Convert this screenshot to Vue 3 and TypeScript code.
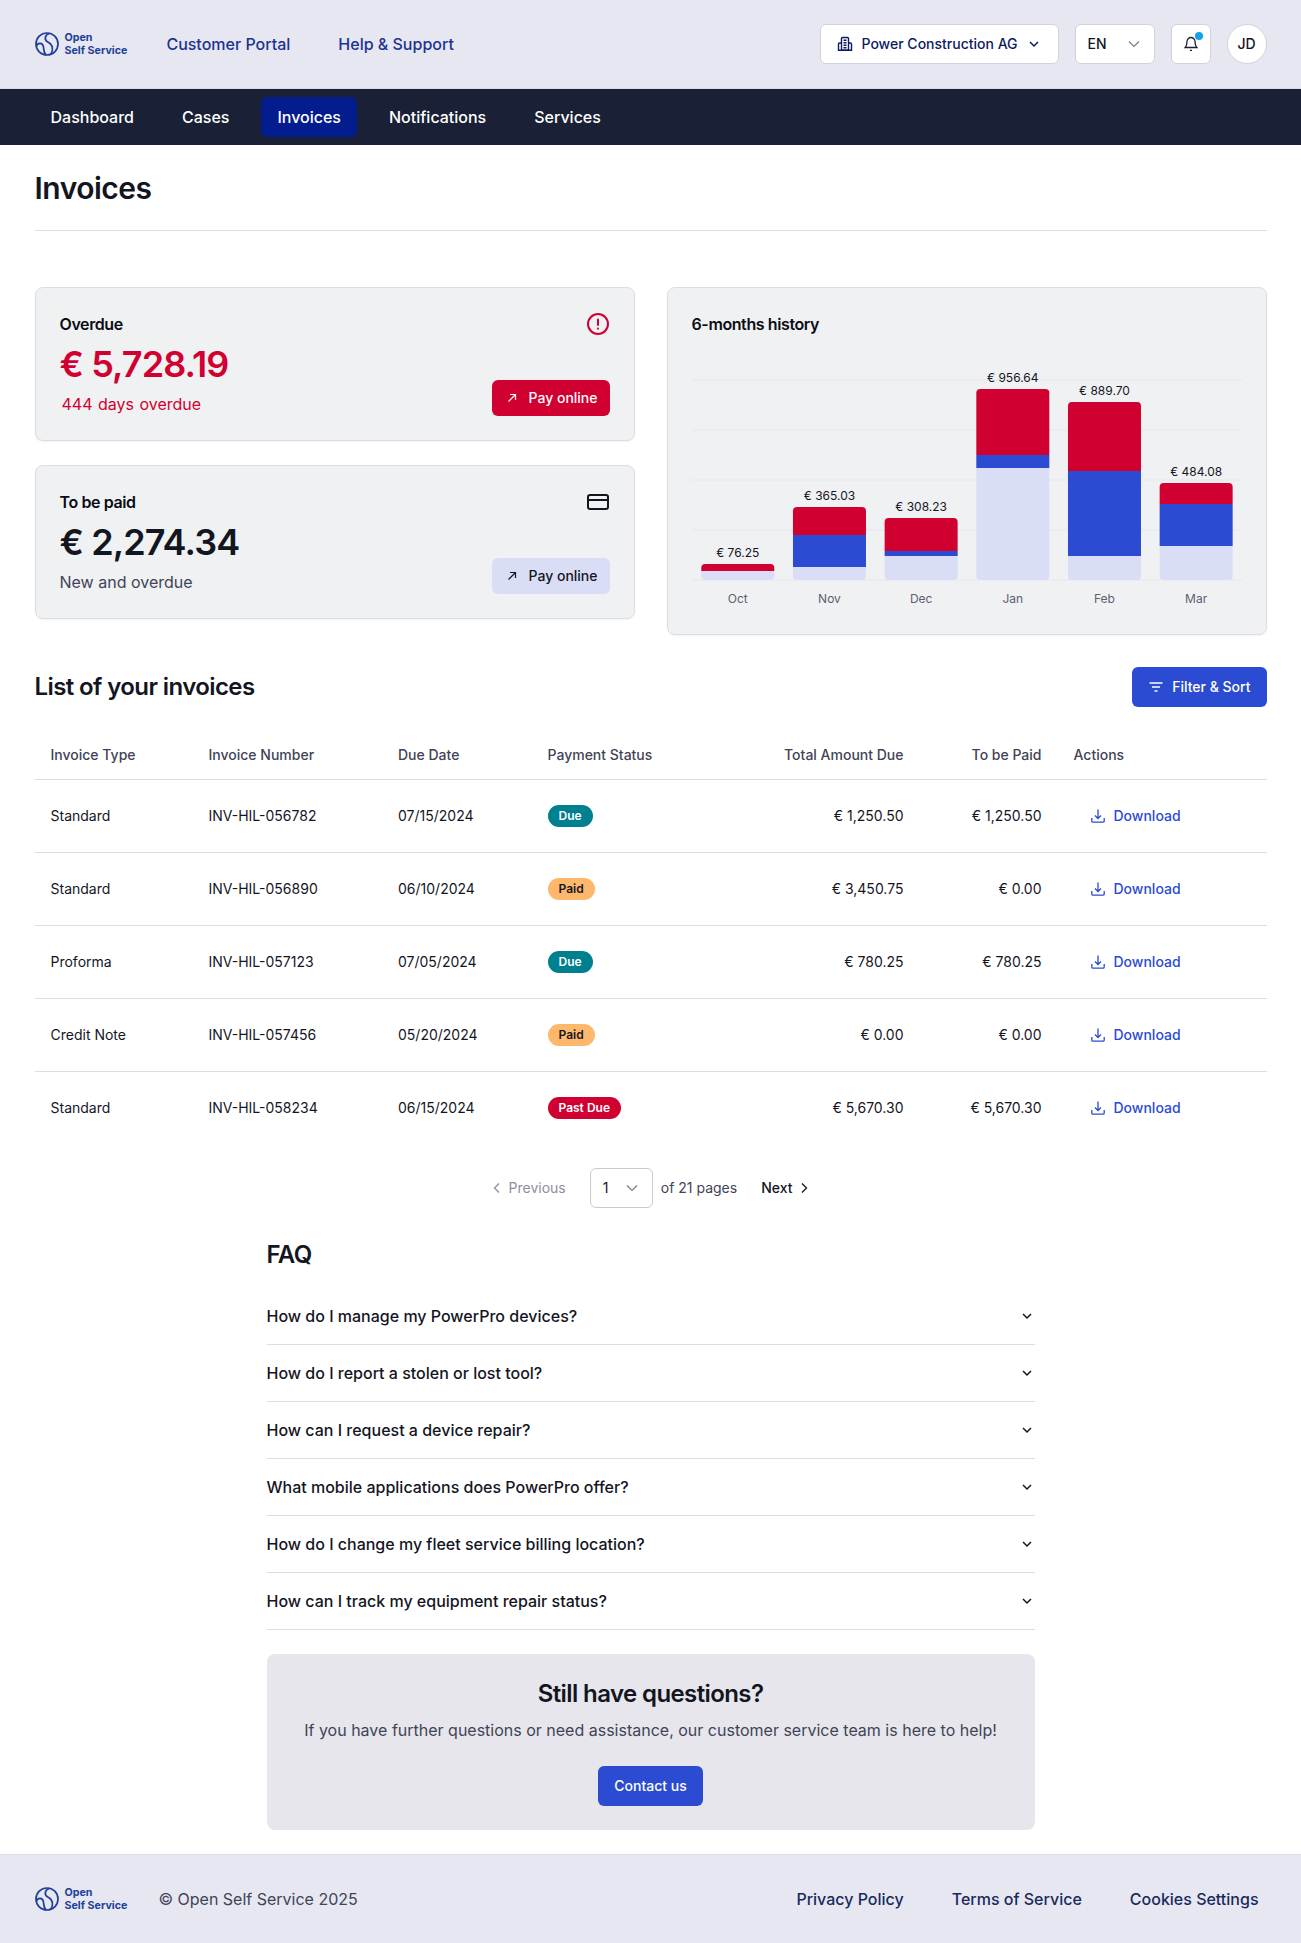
<template>
  <div class="page">
    <header class="topbar">
      <div class="topbar-left">
        <a class="logo">
          <svg class="logo-mark" viewBox="0 0 24 24" fill="none" stroke="currentColor" stroke-width="1.7">
            <circle cx="12" cy="12" r="11" />
            <path d="M14.5 1.2C9.5 3 8.8 8 13.2 10.2C18 12.6 18.6 18 15.8 22.2" />
            <path d="M1.2 14.5C2.4 10.5 7.6 10.2 8.4 14.6C8.9 17.8 8.6 20.8 11.2 22.9" />
          </svg>
          <span class="logo-text">Open<br />Self Service</span>
        </a>
        <nav class="top-links">
          <a>Customer Portal</a>
          <a>Help &amp; Support</a>
        </nav>
      </div>
      <div class="topbar-right">
        <button class="control org">
          <svg class="icon" viewBox="0 0 16 16" fill="none" stroke="currentColor" stroke-width="1.4">
            <path d="M4.5 14.300V2.500a1 1 0 0 1 1-1h5a1 1 0 0 1 1 1v11.800z" />
            <path d="M4.500 7H2.500a1 1 0 0 0-1 1v6.300h13V8a1 1 0 0 0-1-1h-2" />
            <path d="M6.500 4.300h3M6.500 6.800h3M6.500 9.300h3M6.500 11.800h3" />
          </svg>
          <span class="org-name">Power Construction AG</span>
          <svg class="icon chev" viewBox="0 0 16 16" fill="none" stroke="currentColor" stroke-width="1.500"><path d="M4 6l4 4 4-4" /></svg>
        </button>
        <button class="control lang">
          <span>EN</span>
          <svg class="icon chev muted" viewBox="0 0 16 16" fill="none" stroke="currentColor" stroke-width="1.200"><path d="M3 5.500l5 5 5-5" /></svg>
        </button>
        <button class="control square">
          <svg class="icon" viewBox="0 0 16 16" fill="none" stroke="currentColor" stroke-width="1.300">
            <path d="M8 1.500a4 4 0 0 0-4 4c0 3.300-.8 4.800-1.800 6h11.600c-1-1.200-1.800-2.700-1.800-6a4 4 0 0 0-4-4z" />
            <path d="M7 14.300h2" />
          </svg>
          <span class="dot"></span>
        </button>
        <button class="control avatar">JD</button>
      </div>
    </header>

    <nav class="mainnav">
      <a v-for="item in navItems" :key="item" :class="{ active: item === 'Invoices' }">{{ item }}</a>
    </nav>

    <main class="content">
      <div class="title-block">
        <h1>Invoices</h1>
      </div>

      <section class="summary">
        <div class="summary-left">
          <div class="card">
            <div class="card-head">
              <span class="card-title">Overdue</span>
              <svg class="icon-lg red" viewBox="0 0 24 24" fill="none" stroke="currentColor" stroke-width="2" stroke-linecap="round">
                <circle cx="12" cy="12" r="10" />
                <path d="M12 7.500v5.500M12 16.500v.2" />
              </svg>
            </div>
            <div class="card-foot">
              <div>
                <div class="amount red">€ 5,728.19</div>
                <div class="note red indent">444 days overdue</div>
              </div>
              <button class="btn btn-red">
                <svg class="icon" viewBox="0 0 16 16" fill="none" stroke="currentColor" stroke-width="1.200"><path d="M4.500 11.500l7-7M6 4.500h5.500V10" /></svg>
                Pay online
              </button>
            </div>
          </div>
          <div class="card">
            <div class="card-head">
              <span class="card-title">To be paid</span>
              <svg class="icon-lg" viewBox="0 0 24 24" fill="none" stroke="currentColor" stroke-width="2">
                <rect x="2" y="5" width="20" height="14" rx="2" />
                <path d="M2 10h20" />
              </svg>
            </div>
            <div class="card-foot">
              <div>
                <div class="amount">€ 2,274.34</div>
                <div class="note">New and overdue</div>
              </div>
              <button class="btn btn-soft">
                <svg class="icon" viewBox="0 0 16 16" fill="none" stroke="currentColor" stroke-width="1.200"><path d="M4.500 11.500l7-7M6 4.500h5.500V10" /></svg>
                Pay online
              </button>
            </div>
          </div>
        </div>

        <div class="card chart-card">
          <div class="card-title">6-months history</div>
          <svg class="chart" viewBox="0 0 550 274" width="550" height="274">
            <line v-for="y in gridLines" :key="y" x1="0" x2="550" :y1="y" :y2="y" class="grid-line" />
            <g v-for="bar in bars" :key="bar.month">
              <path :d="bar.lavPath" fill="#d9ddf6" />
              <rect :x="bar.x" :y="bar.blueTop" width="73" :height="bar.blueHeight" fill="#2b4bd3" />
              <path :d="bar.redPath" fill="#d00030" />
              <text :x="bar.x + 36.500" :y="bar.top - 7" class="bar-value">{{ bar.value }}</text>
              <text :x="bar.x + 36.500" y="267" class="bar-month">{{ bar.month }}</text>
            </g>
          </svg>
        </div>
      </section>

      <div class="list-head">
        <h2>List of your invoices</h2>
        <button class="btn btn-blue filter">
          <svg class="icon" viewBox="0 0 16 16" fill="none" stroke="currentColor" stroke-width="1.300"><path d="M1.500 4h13M4 8h8M6.500 12h3" /></svg>
          Filter &amp; Sort
        </button>
      </div>

      <table class="invoices">
        <colgroup>
          <col class="c-type" /><col class="c-num" /><col class="c-date" /><col class="c-status" />
          <col class="c-total" /><col class="c-due" /><col class="c-actions" />
        </colgroup>
        <thead>
          <tr>
            <th>Invoice Type</th>
            <th>Invoice Number</th>
            <th>Due Date</th>
            <th>Payment Status</th>
            <th class="num">Total Amount Due</th>
            <th class="num">To be Paid</th>
            <th>Actions</th>
          </tr>
        </thead>
        <tbody>
          <tr v-for="row in invoices" :key="row.number">
            <td>{{ row.type }}</td>
            <td>{{ row.number }}</td>
            <td>{{ row.date }}</td>
            <td><span class="badge" :class="row.badge">{{ row.status }}</span></td>
            <td class="num">{{ row.total }}</td>
            <td class="num">{{ row.toPay }}</td>
            <td>
              <a class="download">
                <svg class="icon" viewBox="0 0 16 16" fill="none" stroke="currentColor" stroke-width="1.300">
                  <path d="M8 1.500v8.500M5 7.500l3 3 3-3" />
                  <path d="M1.800 10v3a1.200 1.200 0 0 0 1.200 1.200h10a1.200 1.200 0 0 0 1.200-1.200v-3" />
                </svg>
                Download
              </a>
            </td>
          </tr>
        </tbody>
      </table>

      <div class="pager">
        <span class="pager-link disabled">
          <svg class="icon" viewBox="0 0 16 16" fill="none" stroke="currentColor" stroke-width="1.300"><path d="M10 3.500L5.500 8l4.500 4.500" /></svg>
          Previous
        </span>
        <span class="page-select">
          1
          <svg class="icon muted" viewBox="0 0 16 16" fill="none" stroke="currentColor" stroke-width="1.200"><path d="M3 5.500l5 5 5-5" /></svg>
        </span>
        <span class="page-count">of 21 pages</span>
        <span class="pager-link">
          Next
          <svg class="icon" viewBox="0 0 16 16" fill="none" stroke="currentColor" stroke-width="1.300"><path d="M6 3.500L10.500 8 6 12.500" /></svg>
        </span>
      </div>

      <section class="faq">
        <h2>FAQ</h2>
        <div class="faq-list">
          <div v-for="q in faqs" :key="q" class="faq-item">
            <span>{{ q }}</span>
            <svg class="icon" viewBox="0 0 16 16" fill="none" stroke="currentColor" stroke-width="1.500"><path d="M4 6l4 4 4-4" /></svg>
          </div>
        </div>
        <div class="contact">
          <h2>Still have questions?</h2>
          <p>If you have further questions or need assistance, our customer service team is here to help!</p>
          <button class="btn btn-blue contact-btn">Contact us</button>
        </div>
      </section>
    </main>

    <footer class="footer">
      <div class="footer-left">
        <a class="logo">
          <svg class="logo-mark" viewBox="0 0 24 24" fill="none" stroke="currentColor" stroke-width="1.700">
            <circle cx="12" cy="12" r="11" />
            <path d="M14.500 1.200C9.500 3 8.800 8 13.200 10.200C18 12.600 18.600 18 15.800 22.200" />
            <path d="M1.200 14.500C2.400 10.500 7.600 10.200 8.400 14.600C8.900 17.800 8.600 20.800 11.200 22.900" />
          </svg>
          <span class="logo-text">Open<br />Self Service</span>
        </a>
        <span class="copyright">© Open Self Service 2025</span>
      </div>
      <nav class="footer-links">
        <a>Privacy Policy</a>
        <a>Terms of Service</a>
        <a>Cookies Settings</a>
      </nav>
    </footer>
  </div>
</template>

<script setup lang="ts">
import { computed } from 'vue'

interface Invoice {
  type: string
  number: string
  date: string
  status: string
  badge: string
  total: string
  toPay: string
}

const navItems = ['Dashboard', 'Cases', 'Invoices', 'Notifications', 'Services']

const invoices: Invoice[] = [
  { type: 'Standard', number: 'INV-HIL-056782', date: '07/15/2024', status: 'Due', badge: 'due', total: '€ 1,250.50', toPay: '€ 1,250.50' },
  { type: 'Standard', number: 'INV-HIL-056890', date: '06/10/2024', status: 'Paid', badge: 'paid', total: '€ 3,450.75', toPay: '€ 0.00' },
  { type: 'Proforma', number: 'INV-HIL-057123', date: '07/05/2024', status: 'Due', badge: 'due', total: '€ 780.25', toPay: '€ 780.25' },
  { type: 'Credit Note', number: 'INV-HIL-057456', date: '05/20/2024', status: 'Paid', badge: 'paid', total: '€ 0.00', toPay: '€ 0.00' },
  { type: 'Standard', number: 'INV-HIL-058234', date: '06/15/2024', status: 'Past Due', badge: 'past', total: '€ 5,670.30', toPay: '€ 5,670.30' }
]

const faqs = [
  'How do I manage my PowerPro devices?',
  'How do I report a stolen or lost tool?',
  'How can I request a device repair?',
  'What mobile applications does PowerPro offer?',
  'How do I change my fleet service billing location?',
  'How can I track my equipment repair status?'
]

// chart geometry, y values are relative to the svg top
const baseline = 244
const gridLines = [44, 94, 144, 194, 244]

const history = [
  { month: 'Oct', value: '€ 76.25', top: 228, redEnd: 235, blueEnd: 235 },
  { month: 'Nov', value: '€ 365.03', top: 171, redEnd: 199, blueEnd: 231 },
  { month: 'Dec', value: '€ 308.23', top: 182, redEnd: 215, blueEnd: 220 },
  { month: 'Jan', value: '€ 956.64', top: 53, redEnd: 119, blueEnd: 132 },
  { month: 'Feb', value: '€ 889.70', top: 66, redEnd: 135, blueEnd: 220 },
  { month: 'Mar', value: '€ 484.08', top: 147, redEnd: 168, blueEnd: 210 }
]

const roundedTop = (x: number, top: number, bottom: number) =>
  `M${x} ${bottom}V${top + 4}a4 4 0 0 1 4-4h65a4 4 0 0 1 4 4V${bottom}z`

const roundedBottom = (x: number, top: number, bottom: number) =>
  `M${x} ${top}h73V${bottom - 4}a4 4 0 0 1-4 4h-65a4 4 0 0 1-4-4z`

const bars = computed(() =>
  history.map((h, i) => {
    const x = 9.3 + i * 91.67
    return {
      ...h,
      x,
      redPath: roundedTop(x, h.top, h.redEnd),
      blueTop: h.redEnd,
      blueHeight: h.blueEnd - h.redEnd,
      lavPath: roundedBottom(x, h.blueEnd, baseline)
    }
  })
)
</script>

<style scoped>
.page {
  font-family: Inter, "Liberation Sans", sans-serif;
  color: #14161f;
  font-size: 14px;
  line-height: 20px;
  background: #fff;
}

h1, h2, p {
  margin: 0;
}

button {
  font-family: inherit;
  line-height: 20px;
  cursor: pointer;
}

.icon {
  width: 16px;
  height: 16px;
  flex: none;
}

.icon-lg {
  width: 24px;
  height: 24px;
  flex: none;
}

.red {
  color: #d00030;
}

.muted {
  color: #787c8c;
}

/* header */
.topbar {
  height: 88px;
  background: #e6e7f1;
  border-bottom: 1px solid #dcdde6;
  padding: 0 34.5px;
  display: flex;
  align-items: center;
  justify-content: space-between;
}

.topbar-left {
  display: flex;
  align-items: center;
  gap: 39px;
}

.logo {
  display: flex;
  align-items: center;
  gap: 6px;
  color: #21409a;
}

.logo-mark {
  width: 24px;
  height: 24px;
  flex: none;
}

.logo-text {
  font-size: 10.7px;
  line-height: 13px;
  font-weight: 700;
  white-space: nowrap;
}

.top-links {
  display: flex;
  gap: 48px;
}

.top-links a {
  font-size: 16px;
  line-height: 24px;
  font-weight: 500;
  color: #1c3391;
}

.topbar-right {
  display: flex;
  align-items: center;
  gap: 16px;
}

.control {
  height: 40px;
  background: #fff;
  border: 1px solid #d1d3dc;
  border-radius: 6px;
  font-size: 14px;
  font-weight: 500;
  color: #0d1b5e;
  display: flex;
  align-items: center;
  padding: 0;
  position: relative;
}

.org {
  width: 239px;
  padding: 0 16px;
  gap: 8px;
}

.org-name {
  white-space: nowrap;
  margin-left: 1px;
}

.lang {
  width: 80px;
  padding: 0 12px;
  justify-content: space-between;
  color: #14161f;
}

.square {
  width: 40px;
  justify-content: center;
  color: #1a2035;
}

.dot {
  position: absolute;
  top: 7px;
  right: 7px;
  width: 8px;
  height: 8px;
  border-radius: 50%;
  background: #0ea5e9;
}

.avatar {
  width: 40px;
  border-radius: 50%;
  justify-content: center;
  color: #14161f;
}

/* main nav */
.mainnav {
  height: 56px;
  background: #1a2035;
  padding: 0 34.5px;
  display: flex;
  align-items: center;
  gap: 16px;
}

.mainnav a {
  height: 40px;
  padding: 0 16px;
  display: flex;
  align-items: center;
  border-radius: 6px;
  font-size: 16px;
  font-weight: 500;
  color: #fff;
}

.mainnav a.active {
  background: #031d8f;
}

/* content */
.content {
  padding: 0 34.5px;
}

.title-block {
  padding: 25px 0 24px;
  border-bottom: 1px solid #dcdde6;
  margin-bottom: 56px;
}

h1 {
  font-size: 30px;
  line-height: 36px;
  font-weight: 600;
  letter-spacing: -0.5px;
}

.summary {
  display: grid;
  grid-template-columns: 1fr 1fr;
  gap: 32px;
  align-items: start;
}

.summary-left {
  display: flex;
  flex-direction: column;
  gap: 24px;
}

.card {
  background: #f0f1f3;
  border: 1px solid #dcdde3;
  border-radius: 8px;
  padding: 24px;
  box-shadow: 0 1px 2px rgba(20, 22, 31, 0.05);
}

.card-head {
  display: flex;
  justify-content: space-between;
  align-items: center;
  height: 24px;
  margin-bottom: 8px;
}

.card-title {
  font-size: 16px;
  line-height: 24px;
  font-weight: 600;
  letter-spacing: -0.025em;
  color: #0b0d14;
}

.card-foot {
  display: flex;
  justify-content: space-between;
  align-items: flex-end;
}

.amount {
  font-size: 36px;
  line-height: 40px;
  font-weight: 600;
  letter-spacing: -0.025em;
  color: #14161f;
}

.amount.red {
  color: #d00030;
}

.note {
  font-size: 16px;
  line-height: 24px;
  margin-top: 8px;
  color: #3f4456;
}

.note.red {
  color: #d00030;
}

.note.indent {
  padding-left: 2px;
  word-spacing: 1px;
}

.btn {
  height: 36px;
  border: 0;
  border-radius: 6px;
  padding: 0 12px;
  display: flex;
  align-items: center;
  gap: 8px;
  font-size: 14px;
  font-weight: 500;
  white-space: nowrap;
}

.btn-red {
  background: #d00030;
  color: #fff;
}

.btn-soft {
  background: #d9ddf6;
  color: #14161f;
}

.btn-blue {
  background: #2b4bd3;
  color: #fff;
  height: 40px;
  padding: 0 16px;
}

.chart {
  display: block;
}

.grid-line {
  stroke: #e9eaee;
  stroke-width: 1.5;
}

.bar-value {
  font-size: 12px;
  text-anchor: middle;
  fill: #14161f;
}

.bar-month {
  font-size: 12px;
  text-anchor: middle;
  fill: #5c6070;
}

/* invoice list */
.list-head {
  display: flex;
  justify-content: space-between;
  align-items: center;
  margin-top: 32px;
  margin-bottom: 24px;
}

.list-head h2,
.faq h2,
.contact h2 {
  font-size: 24px;
  line-height: 32px;
  font-weight: 600;
  letter-spacing: -0.025em;
}

.invoices {
  width: 100%;
  border-collapse: collapse;
  table-layout: fixed;
}

.c-type { width: 158px; }
.c-num { width: 189.5px; }
.c-date { width: 149.5px; }
.c-status { width: 190px; }
.c-total { width: 198px; }
.c-due { width: 138px; }

.invoices th {
  height: 48px;
  padding: 0 16px;
  text-align: left;
  font-weight: 500;
  color: #3f4456;
  border-bottom: 1px solid #dcdde6;
}

.invoices td {
  height: 72px;
  padding: 0 16px;
  border-bottom: 1px solid #dcdde6;
}

.invoices tbody tr:last-child td {
  border-bottom: 0;
}

.invoices .num {
  text-align: right;
}

.badge {
  display: inline-flex;
  align-items: center;
  height: 22px;
  padding: 0 11px;
  border-radius: 11px;
  font-size: 12px;
  font-weight: 600;
  vertical-align: middle;
}

.badge.due {
  background: #00808f;
  color: #fff;
}

.badge.paid {
  background: #fdb86b;
  color: #14161f;
}

.badge.past {
  background: #d00030;
  color: #fff;
}

.download {
  display: flex;
  align-items: center;
  gap: 8px;
  padding-left: 16px;
  color: #2b4bd3;
  font-weight: 500;
}

/* pagination */
.pager {
  display: flex;
  justify-content: center;
  align-items: center;
  margin-top: 24px;
  gap: 8px;
}

.pager-link {
  display: flex;
  align-items: center;
  gap: 4px;
  font-weight: 500;
  padding: 0 8px;
  color: #14161f;
}

.pager-link.disabled {
  color: #8d909c;
  font-weight: 400;
  margin-right: 8px;
}

.page-select {
  box-sizing: border-box;
  width: 63px;
  height: 40px;
  border: 1px solid #c9cbd3;
  border-radius: 6px;
  padding: 0 12px;
  display: flex;
  align-items: center;
  justify-content: space-between;
}

.page-count {
  color: #3f4456;
  margin-right: 8px;
}

/* faq */
.faq {
  width: 768px;
  margin: 31px auto 24px;
}

.faq-list {
  margin-top: 17px;
}

.faq-item {
  height: 56px;
  border-bottom: 1px solid #dcdde6;
  display: flex;
  align-items: center;
  justify-content: space-between;
  font-size: 16px;
  font-weight: 500;
}

.contact {
  margin-top: 24px;
  padding: 24px;
  background: #e6e6ec;
  border-radius: 8px;
  display: flex;
  flex-direction: column;
  align-items: center;
  text-align: center;
}

.contact p {
  margin-top: 8px;
  font-size: 16px;
  line-height: 24px;
  color: #3f4456;
}

.contact-btn {
  margin-top: 24px;
}

/* footer */
.footer {
  height: 88px;
  background: #e6e7f1;
  border-top: 1px solid #dcdde6;
  padding: 0 34.5px;
  display: flex;
  align-items: center;
  justify-content: space-between;
}

.footer-left {
  display: flex;
  align-items: center;
  gap: 31px;
}

.copyright {
  font-size: 16px;
  line-height: 24px;
  color: #3f4456;
}

.footer-links {
  display: flex;
  gap: 32px;
}

.footer-links a {
  padding: 0 8px;
  font-size: 16px;
  line-height: 24px;
  font-weight: 500;
  color: #1a2a5c;
}
</style>
